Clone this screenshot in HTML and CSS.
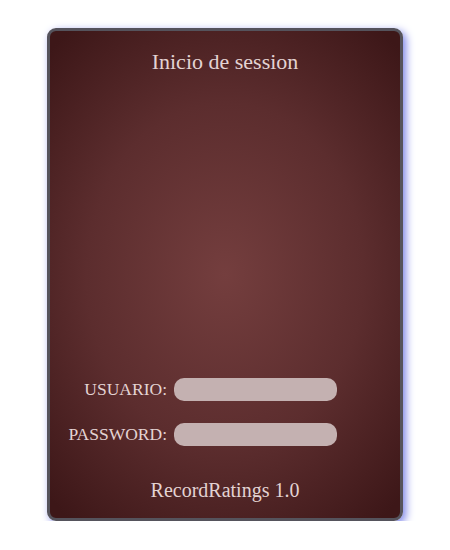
FILE: index.html
```html
<!DOCTYPE html>
<html lang="es">
<head>
<meta charset="utf-8">
<title>Inicio de session</title>
<link rel="stylesheet" href="styles.css">
</head>
<body>
<div class="panel">
  <h1 class="title">Inicio de session</h1>
  <form class="login">
    <label class="label" for="u">USUARIO:</label>
    <input class="field" id="u" type="text">
    <label class="label" for="p">PASSWORD:</label>
    <input class="field" id="p" type="password">
  </form>
  <div class="footer">RecordRatings 1.0</div>
</div>
</body>
</html>
```

FILE: styles.css
```css
html, body {
  margin: 0;
  padding: 0;
  background: #ffffff;
}
body {
  padding-top: 28px;
  font-family: "Liberation Serif", "Times New Roman", serif;
}
.panel {
  box-sizing: border-box;
  width: 356px;
  height: 493px;
  margin: 0 auto;
  border: 3px solid #55535c;
  border-radius: 9px;
  background: radial-gradient(ellipse 72% 64% at 50% 50%, #743e3e 0%, #5c2d2e 55%, #3d1718 100%);
  box-shadow: 3px 3px 8px #7c84e8;
  display: flex;
  flex-direction: column;
  color: #e3d3d3;
}
.title {
  margin: 0;
  padding-top: 18px;
  font-size: 22px;
  font-weight: normal;
  line-height: 26px;
  text-align: center;
}
.login {
  margin-top: auto;
  display: grid;
  grid-template-columns: 117px 163px;
  column-gap: 7px;
  row-gap: 22px;
  align-items: center;
}
.label {
  text-align: right;
  font-size: 17.5px;
  line-height: 23px;
}
.field {
  box-sizing: border-box;
  height: 23px;
  margin: 0;
  padding: 0 8px;
  border: none;
  border-radius: 10px;
  background: #c4b1b1;
  outline: none;
}
.footer {
  margin-top: 32px;
  padding-bottom: 16px;
  font-size: 20px;
  line-height: 24px;
  text-align: center;
}
```
